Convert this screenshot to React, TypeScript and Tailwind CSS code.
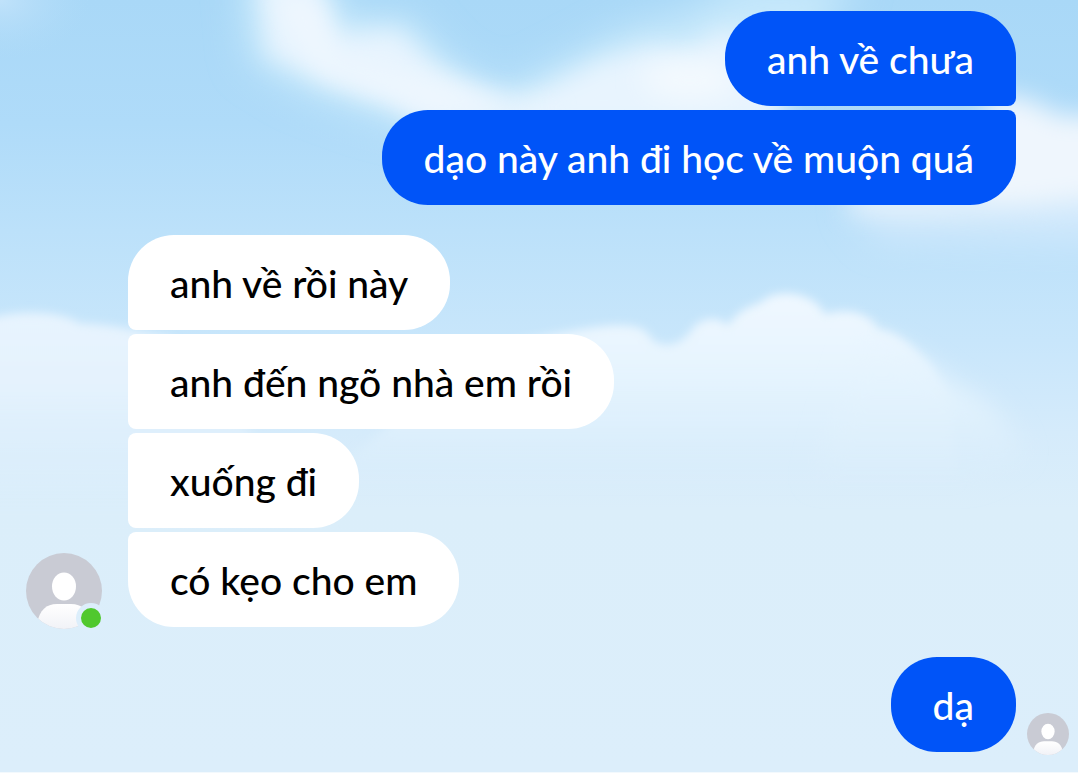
import { clsx } from "clsx";

type Message = {
  text: string;
};

type MessageGroup = {
  id: string;
  from: "me" | "friend";
  messages: Message[];
  seen?: boolean;
};

const conversation: MessageGroup[] = [
  {
    id: "g1",
    from: "me",
    messages: [{ text: "anh về chưa" }, { text: "dạo này anh đi học về muộn quá" }],
  },
  {
    id: "g2",
    from: "friend",
    messages: [
      { text: "anh về rồi này" },
      { text: "anh đến ngõ nhà em rồi" },
      { text: "xuống đi" },
      { text: "có kẹo cho em" },
    ],
  },
  { id: "g3", from: "me", messages: [{ text: "dạ" }], seen: true },
];

const Avatar = ({ className }: { className?: string }) => (
  <svg viewBox="0 0 76 76" className={className} aria-hidden="true">
    <defs>
      <clipPath id="avatar-clip">
        <circle cx="38" cy="38" r="38" />
      </clipPath>
      <linearGradient id="avatar-body" x1="0" y1="0" x2="0" y2="1">
        <stop offset="0" stopColor="#fff" />
        <stop offset="1" stopColor="#f0f1f6" />
      </linearGradient>
    </defs>
    <g clipPath="url(#avatar-clip)">
      <rect width="76" height="76" fill="#c9cbd4" />
      <ellipse cx="38" cy="33.5" rx="12" ry="14" fill="#fff" />
      <path
        d="M11 70C14 57 20 51 31 51H45C56 51 62 57 65 70L60 78H16Z"
        fill="url(#avatar-body)"
      />
    </g>
  </svg>
);

const Sky = () => (
  <svg
    viewBox="0 0 1078 773"
    preserveAspectRatio="none"
    className="absolute inset-0 h-full w-full"
    aria-hidden="true"
  >
    <defs>
      <linearGradient id="sky" x1="0" y1="0" x2="0" y2="1">
        <stop offset="0" stopColor="#a9d8f7" />
        <stop offset="0.16" stopColor="#afdbf9" />
        <stop offset="0.3" stopColor="#bce1fa" />
        <stop offset="0.44" stopColor="#c8e6fb" />
        <stop offset="0.56" stopColor="#d5ebfb" />
        <stop offset="0.66" stopColor="#dbeefa" />
        <stop offset="1" stopColor="#dceefb" />
      </linearGradient>
      <linearGradient id="cloud-fade" x1="0" y1="290" x2="0" y2="490" gradientUnits="userSpaceOnUse">
        <stop offset="0" stopColor="#f0f8ff" />
        <stop offset="0.4" stopColor="#e6f4fe" />
        <stop offset="0.65" stopColor="#e0f1fd" stopOpacity="0.9" />
        <stop offset="1" stopColor="#dceefb" stopOpacity="0" />
      </linearGradient>
      <linearGradient id="left-fade" x1="0" y1="310" x2="0" y2="540" gradientUnits="userSpaceOnUse">
        <stop offset="0" stopColor="#e8f4fe" />
        <stop offset="0.35" stopColor="#e4f2fd" />
        <stop offset="1" stopColor="#dceefb" stopOpacity="0" />
      </linearGradient>
      <radialGradient id="corner">
        <stop offset="0" stopColor="#c0e2fa" />
        <stop offset="1" stopColor="#b0dbf8" stopOpacity="0" />
      </radialGradient>
      <filter id="blur-lg" x="-30%" y="-50%" width="160%" height="200%">
        <feGaussianBlur stdDeviation="18" />
      </filter>
      <filter id="blur-md" x="-30%" y="-50%" width="160%" height="200%">
        <feGaussianBlur stdDeviation="12" />
      </filter>
      <filter id="blur-sm" x="-30%" y="-30%" width="160%" height="160%">
        <feGaussianBlur stdDeviation="5" />
      </filter>
    </defs>
    <rect width="1078" height="773" fill="url(#sky)" />

    {/* wisps along the top */}
    <path
      d="M240 -30H325L350 18L410 16L450 62L505 90L560 62L625 28L690 12L740 -20L860 -20L800 60L760 130H420L370 118L300 92L248 60Z"
      fill="#c6e8fb"
      filter="url(#blur-lg)"
    />
    <path
      d="M258 -30H312L338 34L398 30L432 62L470 86L510 104L560 80L600 60L650 46L690 48L720 30L780 40V130H430L390 104L330 84L268 56Z"
      fill="#e8f4fe"
      filter="url(#blur-md)"
    />
    <path
      d="M275 0H315L335 60L440 85L560 110H430L320 72Z"
      fill="#eff7fe"
      filter="url(#blur-md)"
    />
    <ellipse cx="690" cy="80" rx="48" ry="20" fill="#f3f9fe" filter="url(#blur-md)" />
    <ellipse cx="0" cy="0" rx="90" ry="60" fill="url(#corner)" />

    {/* bank on the right edge */}
    <path
      d="M850 200H1000L1130 170V242L980 240L880 238Z"
      fill="#d2e9fc"
      filter="url(#blur-lg)"
    />
    <path
      d="M990 92L1030 100L1060 116L1130 116V196L1030 208L940 212H850V195H980Z"
      fill="#eff6fd"
      filter="url(#blur-md)"
    />

    {/* low clouds */}
    <path
      d="M480 350C600 325 640 316 652 340C665 350 680 345 690 333C698 318 718 315 728 326C740 308 755 306 762 302C775 288 815 292 825 315C845 308 870 312 878 330C900 332 915 350 930 365L950 400L960 500H300Z"
      fill="url(#cloud-fade)"
      filter="url(#blur-sm)"
    />
    <path
      d="M860 335C900 345 930 365 955 385C985 395 1010 420 1025 455L940 510H800Z"
      fill="url(#cloud-fade)"
      filter="url(#blur-md)"
    />
    <path
      d="M-20 322C10 310 60 310 80 324C110 325 130 330 170 338L340 540H-20Z"
      fill="url(#left-fade)"
      filter="url(#blur-sm)"
    />
  </svg>
);

type BubbleProps = {
  text: string;
  mine: boolean;
  first: boolean;
  last: boolean;
};

const Bubble = ({ text, mine, first, last }: BubbleProps) => (
  <p
    className={clsx(
      "rounded-[46px] px-[42px] pt-6 pb-[23px] font-['Lato','Noto_Sans',sans-serif] text-[39px] leading-[48px] font-medium",
      mine ? "bg-[#0054f8] text-white" : "bg-white text-black",
      mine && !first && "rounded-tr-lg",
      mine && !last && "rounded-br-lg",
      !mine && !first && "rounded-tl-lg",
      !mine && !last && "rounded-bl-lg"
    )}
  >
    {text}
  </p>
);

const Group = ({ from, messages, seen }: MessageGroup) => {
  const mine = from === "me";

  return (
    <section
      className={clsx(
        "flex items-end",
        mine ? "justify-end" : "gap-[26px] pl-[26px]",
        mine && (seen ? "gap-[11px] pr-[9px]" : "pr-[62px]")
      )}
    >
      {!mine && (
        <div className="relative -mb-0.5 shrink-0">
          <Avatar className="size-[76px]" />
          <span className="absolute -right-1 -bottom-1 size-[30px] rounded-full border-5 border-[#dceefb] bg-[#50c82e]" />
        </div>
      )}
      <div className={clsx("flex flex-col gap-1", mine ? "items-end" : "items-start")}>
        {messages.map((message, i) => (
          <Bubble
            key={message.text}
            text={message.text}
            mine={mine}
            first={i === 0}
            last={i === messages.length - 1}
          />
        ))}
      </div>
      {seen && <Avatar className="-mb-[3px] size-[42px] shrink-0" />}
    </section>
  );
};

export default function App() {
  return (
    <main className="relative isolate min-h-screen overflow-hidden border-b border-[#f3f9fd] bg-[#dceefb]">
      <Sky />
      <div className="relative flex flex-col gap-[30px] pt-[11px] pb-5">
        {conversation.map((group) => (
          <Group key={group.id} {...group} />
        ))}
      </div>
    </main>
  );
}
